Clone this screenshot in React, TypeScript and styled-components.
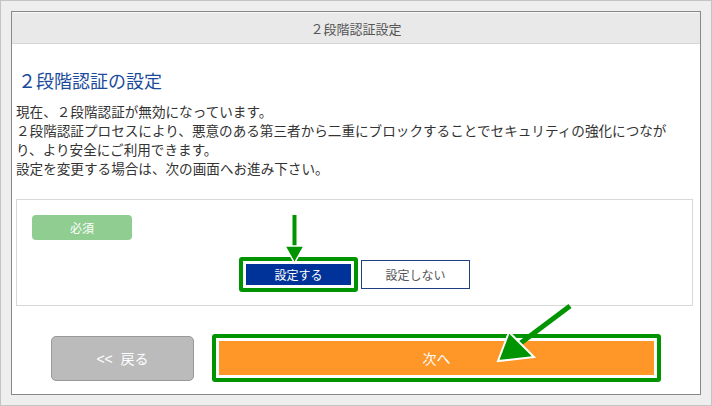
import React from 'react';
import styled, { createGlobalStyle } from 'styled-components';

const GlobalStyle = createGlobalStyle`
  html, body {
    margin: 0;
    padding: 0;
    background: #eeeeee;
  }
  body {
    font-family: "Noto Sans CJK JP", "Noto Sans", sans-serif;
  }
`;

const Frame = styled.div`
  width: 712px;
  height: 406px;
  box-sizing: border-box;
  border: 1px solid #c4c4c4;
  background: #eeeeee;
  padding: 10px;
`;

const Panel = styled.div`
  position: relative;
  height: 100%;
  box-sizing: border-box;
  border: 1px solid #888888;
  background: #ffffff;
  display: flex;
  flex-direction: column;
`;

const Header = styled.div`
  height: 30px;
  background: #e9e9e9;
  border-top: 1px solid #f6f6f6;
  border-bottom: 1px solid #d6d6d6;
  display: flex;
  align-items: center;
  justify-content: center;
  font-size: 13px;
  color: #555555;
`;

const Body = styled.div`
  padding: 0 7px 0 4px;
`;

const Title = styled.h2`
  margin: 24px 0 0;
  padding-left: 2px;
  font-size: 18px;
  font-weight: normal;
  line-height: 24px;
  color: #1c4b9b;
`;

const Description = styled.p`
  margin: 10px 0 0;
  font-size: 13.6px;
  line-height: 19px;
  color: #333333;
`;

const SettingBox = styled.div`
  position: relative;
  margin-top: 21px;
  border: 1px solid #d8d8d8;
  padding: 15px 15px 13px;
  display: flex;
  flex-direction: column;
`;

const Badge = styled.div`
  width: 100px;
  height: 25px;
  border-radius: 4px;
  background: #90cd90;
  color: #ffffff;
  font-size: 12px;
  display: flex;
  align-items: center;
  justify-content: center;
`;

const ChoiceRow = styled.div`
  margin-top: 17px;
  display: flex;
  justify-content: center;
  align-items: center;
  gap: 3px;
`;

const Highlight = styled.div`
  border: 4px solid #009500;
  border-radius: 3px;
  padding: 3px;
  background: #ffffff;
  display: flex;
`;

const ChoiceButton = styled.button<{ $active?: boolean }>`
  box-sizing: border-box;
  margin: 0;
  padding: 0;
  font-family: inherit;
  font-size: 12px;
  display: flex;
  align-items: center;
  justify-content: center;
  width: ${(p) => (p.$active ? '105px' : '109px')};
  height: ${(p) => (p.$active ? '21px' : '29px')};
  border: ${(p) => (p.$active ? 'none' : '1px solid #1f3f80')};
  background: ${(p) => (p.$active ? '#003399' : '#ffffff')};
  color: ${(p) => (p.$active ? '#ffffff' : '#555555')};
`;

const Footer = styled.div`
  margin-top: 28px;
  display: flex;
  justify-content: center;
  align-items: center;
  gap: 18px;
`;

const BackButton = styled.button`
  box-sizing: border-box;
  margin: 0;
  width: 143px;
  height: 45px;
  border: 1px solid #999999;
  border-radius: 5px;
  background: #bbbbbb;
  color: #ffffff;
  font-family: "Liberation Sans", "Noto Sans CJK JP", sans-serif;
  font-size: 14px;
`;

const NextButton = styled.button`
  box-sizing: border-box;
  margin: 0;
  width: 435px;
  height: 34px;
  border: none;
  background: #ff9628;
  color: #ffffff;
  font-family: inherit;
  font-size: 14px;
`;

const Overlay = styled.svg`
  position: absolute;
  overflow: visible;
  pointer-events: none;
`;

const DownArrow = styled(Overlay)`
  left: 263px;
  top: 10px;
  width: 30px;
  height: 56px;
`;

const SlantArrow = styled(Overlay)`
  left: 468px;
  top: 283px;
  width: 100px;
  height: 75px;
`;

function App() {
  return (
    <Frame>
      <GlobalStyle />
      <Panel>
        <Header>２段階認証設定</Header>
        <Body>
          <Title>２段階認証の設定</Title>
          <Description>
            現在、２段階認証が無効になっています。
            <br />
            ２段階認証プロセスにより、悪意のある第三者から二重にブロックすることでセキュリティの強化につながり、より安全にご利用できます。
            <br />
            設定を変更する場合は、次の画面へお進み下さい。
          </Description>
          <SettingBox>
            <Badge>必須</Badge>
            <ChoiceRow>
              <Highlight>
                <ChoiceButton $active>設定する</ChoiceButton>
              </Highlight>
              <ChoiceButton>設定しない</ChoiceButton>
            </ChoiceRow>
            <DownArrow viewBox="280 210 30 56">
              <line x1="294.5" y1="215" x2="294.5" y2="250" stroke="#009500" strokeWidth="4" />
              <polygon
                points="285,246 294.5,263 304,246"
                fill="#009500"
                stroke="#ffffff"
                strokeWidth="1.5"
              />
            </DownArrow>
          </SettingBox>
        </Body>
        <Footer>
          <BackButton>{'<<\u00a0\u00a0戻る'}</BackButton>
          <Highlight>
            <NextButton>次へ</NextButton>
          </Highlight>
        </Footer>
        <SlantArrow viewBox="480 295 100 75">
          <line x1="570" y1="306" x2="518" y2="345" stroke="#009500" strokeWidth="5" />
          <polygon
            points="498,361 509,332 534,357"
            fill="#009500"
            stroke="#ffffff"
            strokeWidth="2"
          />
        </SlantArrow>
      </Panel>
    </Frame>
  );
}

export default App;
